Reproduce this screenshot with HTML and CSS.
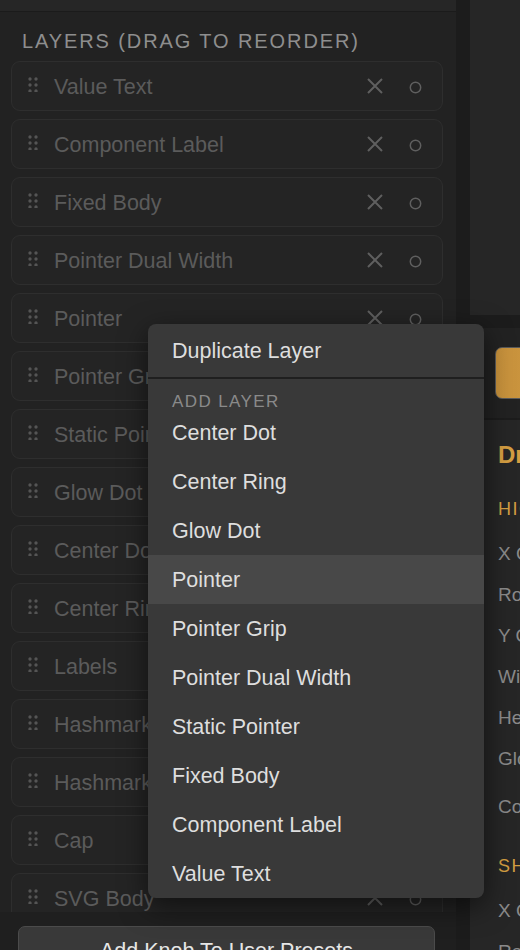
FILE: index.html
```html
<!DOCTYPE html>
<html lang="en">
<head>
    <meta charset="UTF-8">
    <meta name="viewport" content="width=device-width, initial-scale=1.0">
    <title>Knob Designer</title>
    <link rel="stylesheet" href="styles.css">
</head>
<body>
    <div class="app">
        <aside class="sidebar">
            <div class="sidebar-top"></div>
            <section class="layers">
                <h3 class="section-title">Layers (drag to reorder)</h3>
                <ul class="layer-list">
                    <li class="layer">
                        <svg class="grip" width="11" height="15" viewBox="0 0 11 15"><circle cx="2" cy="2" r="1.7"/><circle cx="8" cy="2" r="1.7"/><circle cx="2" cy="8" r="1.7"/><circle cx="8" cy="8" r="1.7"/><circle cx="2" cy="14" r="1.7"/><circle cx="8" cy="14" r="1.7"/></svg>
                        <span class="layer-name">Value Text</span>
                        <svg class="remove" width="16" height="16" viewBox="0 0 16 16"><path d="M1 1L15 15M15 1L1 15"/></svg>
                        <svg class="toggle" width="13" height="13" viewBox="0 0 13 13"><circle cx="6.5" cy="6.5" r="5.2"/></svg>
                    </li>
                    <li class="layer">
                        <svg class="grip" width="11" height="15" viewBox="0 0 11 15"><circle cx="2" cy="2" r="1.7"/><circle cx="8" cy="2" r="1.7"/><circle cx="2" cy="8" r="1.7"/><circle cx="8" cy="8" r="1.7"/><circle cx="2" cy="14" r="1.7"/><circle cx="8" cy="14" r="1.7"/></svg>
                        <span class="layer-name">Component Label</span>
                        <svg class="remove" width="16" height="16" viewBox="0 0 16 16"><path d="M1 1L15 15M15 1L1 15"/></svg>
                        <svg class="toggle" width="13" height="13" viewBox="0 0 13 13"><circle cx="6.5" cy="6.5" r="5.2"/></svg>
                    </li>
                    <li class="layer">
                        <svg class="grip" width="11" height="15" viewBox="0 0 11 15"><circle cx="2" cy="2" r="1.7"/><circle cx="8" cy="2" r="1.7"/><circle cx="2" cy="8" r="1.7"/><circle cx="8" cy="8" r="1.7"/><circle cx="2" cy="14" r="1.7"/><circle cx="8" cy="14" r="1.7"/></svg>
                        <span class="layer-name">Fixed Body</span>
                        <svg class="remove" width="16" height="16" viewBox="0 0 16 16"><path d="M1 1L15 15M15 1L1 15"/></svg>
                        <svg class="toggle" width="13" height="13" viewBox="0 0 13 13"><circle cx="6.5" cy="6.5" r="5.2"/></svg>
                    </li>
                    <li class="layer">
                        <svg class="grip" width="11" height="15" viewBox="0 0 11 15"><circle cx="2" cy="2" r="1.7"/><circle cx="8" cy="2" r="1.7"/><circle cx="2" cy="8" r="1.7"/><circle cx="8" cy="8" r="1.7"/><circle cx="2" cy="14" r="1.7"/><circle cx="8" cy="14" r="1.7"/></svg>
                        <span class="layer-name">Pointer Dual Width</span>
                        <svg class="remove" width="16" height="16" viewBox="0 0 16 16"><path d="M1 1L15 15M15 1L1 15"/></svg>
                        <svg class="toggle" width="13" height="13" viewBox="0 0 13 13"><circle cx="6.5" cy="6.5" r="5.2"/></svg>
                    </li>
                    <li class="layer">
                        <svg class="grip" width="11" height="15" viewBox="0 0 11 15"><circle cx="2" cy="2" r="1.7"/><circle cx="8" cy="2" r="1.7"/><circle cx="2" cy="8" r="1.7"/><circle cx="8" cy="8" r="1.7"/><circle cx="2" cy="14" r="1.7"/><circle cx="8" cy="14" r="1.7"/></svg>
                        <span class="layer-name">Pointer</span>
                        <svg class="remove" width="16" height="16" viewBox="0 0 16 16"><path d="M1 1L15 15M15 1L1 15"/></svg>
                        <svg class="toggle" width="13" height="13" viewBox="0 0 13 13"><circle cx="6.5" cy="6.5" r="5.2"/></svg>
                    </li>
                    <li class="layer">
                        <svg class="grip" width="11" height="15" viewBox="0 0 11 15"><circle cx="2" cy="2" r="1.7"/><circle cx="8" cy="2" r="1.7"/><circle cx="2" cy="8" r="1.7"/><circle cx="8" cy="8" r="1.7"/><circle cx="2" cy="14" r="1.7"/><circle cx="8" cy="14" r="1.7"/></svg>
                        <span class="layer-name">Pointer Grip</span>
                        <svg class="remove" width="16" height="16" viewBox="0 0 16 16"><path d="M1 1L15 15M15 1L1 15"/></svg>
                        <svg class="toggle" width="13" height="13" viewBox="0 0 13 13"><circle cx="6.5" cy="6.5" r="5.2"/></svg>
                    </li>
                    <li class="layer">
                        <svg class="grip" width="11" height="15" viewBox="0 0 11 15"><circle cx="2" cy="2" r="1.7"/><circle cx="8" cy="2" r="1.7"/><circle cx="2" cy="8" r="1.7"/><circle cx="8" cy="8" r="1.7"/><circle cx="2" cy="14" r="1.7"/><circle cx="8" cy="14" r="1.7"/></svg>
                        <span class="layer-name">Static Pointer</span>
                        <svg class="remove" width="16" height="16" viewBox="0 0 16 16"><path d="M1 1L15 15M15 1L1 15"/></svg>
                        <svg class="toggle" width="13" height="13" viewBox="0 0 13 13"><circle cx="6.5" cy="6.5" r="5.2"/></svg>
                    </li>
                    <li class="layer">
                        <svg class="grip" width="11" height="15" viewBox="0 0 11 15"><circle cx="2" cy="2" r="1.7"/><circle cx="8" cy="2" r="1.7"/><circle cx="2" cy="8" r="1.7"/><circle cx="8" cy="8" r="1.7"/><circle cx="2" cy="14" r="1.7"/><circle cx="8" cy="14" r="1.7"/></svg>
                        <span class="layer-name">Glow Dot</span>
                        <svg class="remove" width="16" height="16" viewBox="0 0 16 16"><path d="M1 1L15 15M15 1L1 15"/></svg>
                        <svg class="toggle" width="13" height="13" viewBox="0 0 13 13"><circle cx="6.5" cy="6.5" r="5.2"/></svg>
                    </li>
                    <li class="layer">
                        <svg class="grip" width="11" height="15" viewBox="0 0 11 15"><circle cx="2" cy="2" r="1.7"/><circle cx="8" cy="2" r="1.7"/><circle cx="2" cy="8" r="1.7"/><circle cx="8" cy="8" r="1.7"/><circle cx="2" cy="14" r="1.7"/><circle cx="8" cy="14" r="1.7"/></svg>
                        <span class="layer-name">Center Dot</span>
                        <svg class="remove" width="16" height="16" viewBox="0 0 16 16"><path d="M1 1L15 15M15 1L1 15"/></svg>
                        <svg class="toggle" width="13" height="13" viewBox="0 0 13 13"><circle cx="6.5" cy="6.5" r="5.2"/></svg>
                    </li>
                    <li class="layer">
                        <svg class="grip" width="11" height="15" viewBox="0 0 11 15"><circle cx="2" cy="2" r="1.7"/><circle cx="8" cy="2" r="1.7"/><circle cx="2" cy="8" r="1.7"/><circle cx="8" cy="8" r="1.7"/><circle cx="2" cy="14" r="1.7"/><circle cx="8" cy="14" r="1.7"/></svg>
                        <span class="layer-name">Center Ring</span>
                        <svg class="remove" width="16" height="16" viewBox="0 0 16 16"><path d="M1 1L15 15M15 1L1 15"/></svg>
                        <svg class="toggle" width="13" height="13" viewBox="0 0 13 13"><circle cx="6.5" cy="6.5" r="5.2"/></svg>
                    </li>
                    <li class="layer">
                        <svg class="grip" width="11" height="15" viewBox="0 0 11 15"><circle cx="2" cy="2" r="1.7"/><circle cx="8" cy="2" r="1.7"/><circle cx="2" cy="8" r="1.7"/><circle cx="8" cy="8" r="1.7"/><circle cx="2" cy="14" r="1.7"/><circle cx="8" cy="14" r="1.7"/></svg>
                        <span class="layer-name">Labels</span>
                        <svg class="remove" width="16" height="16" viewBox="0 0 16 16"><path d="M1 1L15 15M15 1L1 15"/></svg>
                        <svg class="toggle" width="13" height="13" viewBox="0 0 13 13"><circle cx="6.5" cy="6.5" r="5.2"/></svg>
                    </li>
                    <li class="layer">
                        <svg class="grip" width="11" height="15" viewBox="0 0 11 15"><circle cx="2" cy="2" r="1.7"/><circle cx="8" cy="2" r="1.7"/><circle cx="2" cy="8" r="1.7"/><circle cx="8" cy="8" r="1.7"/><circle cx="2" cy="14" r="1.7"/><circle cx="8" cy="14" r="1.7"/></svg>
                        <span class="layer-name">Hashmarks Major</span>
                        <svg class="remove" width="16" height="16" viewBox="0 0 16 16"><path d="M1 1L15 15M15 1L1 15"/></svg>
                        <svg class="toggle" width="13" height="13" viewBox="0 0 13 13"><circle cx="6.5" cy="6.5" r="5.2"/></svg>
                    </li>
                    <li class="layer">
                        <svg class="grip" width="11" height="15" viewBox="0 0 11 15"><circle cx="2" cy="2" r="1.7"/><circle cx="8" cy="2" r="1.7"/><circle cx="2" cy="8" r="1.7"/><circle cx="8" cy="8" r="1.7"/><circle cx="2" cy="14" r="1.7"/><circle cx="8" cy="14" r="1.7"/></svg>
                        <span class="layer-name">Hashmarks Minor</span>
                        <svg class="remove" width="16" height="16" viewBox="0 0 16 16"><path d="M1 1L15 15M15 1L1 15"/></svg>
                        <svg class="toggle" width="13" height="13" viewBox="0 0 13 13"><circle cx="6.5" cy="6.5" r="5.2"/></svg>
                    </li>
                    <li class="layer">
                        <svg class="grip" width="11" height="15" viewBox="0 0 11 15"><circle cx="2" cy="2" r="1.7"/><circle cx="8" cy="2" r="1.7"/><circle cx="2" cy="8" r="1.7"/><circle cx="8" cy="8" r="1.7"/><circle cx="2" cy="14" r="1.7"/><circle cx="8" cy="14" r="1.7"/></svg>
                        <span class="layer-name">Cap</span>
                        <svg class="remove" width="16" height="16" viewBox="0 0 16 16"><path d="M1 1L15 15M15 1L1 15"/></svg>
                        <svg class="toggle" width="13" height="13" viewBox="0 0 13 13"><circle cx="6.5" cy="6.5" r="5.2"/></svg>
                    </li>
                    <li class="layer">
                        <svg class="grip" width="11" height="15" viewBox="0 0 11 15"><circle cx="2" cy="2" r="1.7"/><circle cx="8" cy="2" r="1.7"/><circle cx="2" cy="8" r="1.7"/><circle cx="8" cy="8" r="1.7"/><circle cx="2" cy="14" r="1.7"/><circle cx="8" cy="14" r="1.7"/></svg>
                        <span class="layer-name">SVG Body</span>
                        <svg class="remove" width="16" height="16" viewBox="0 0 16 16"><path d="M1 1L15 15M15 1L1 15"/></svg>
                        <svg class="toggle" width="13" height="13" viewBox="0 0 13 13"><circle cx="6.5" cy="6.5" r="5.2"/></svg>
                    </li>
                </ul>
            </section>
            <div class="sidebar-footer">
                <button class="btn">Add Knob To User Presets</button>
            </div>
        </aside>

        <main class="workspace">
            <div class="preview"></div>
            <div class="toolbar">
                <button class="btn-accent">Export Knob</button>
            </div>
            <div class="props">
                <h2 class="props-title">Drop Pointer</h2>
                <div class="group">
                    <h4 class="group-title">Highlight</h4>
                    <div class="prop-row">X Offset</div>
                    <div class="prop-row">Rotation</div>
                    <div class="prop-row">Y Offset</div>
                    <div class="prop-row">Width</div>
                    <div class="prop-row">Height</div>
                    <div class="prop-row">Glow</div>
                    <div class="prop-row tall">Color</div>
                </div>
                <div class="group">
                    <h4 class="group-title">Shadow</h4>
                    <div class="prop-row">X Offset</div>
                    <div class="prop-row">Radius</div>
                </div>
            </div>
        </main>

        <div class="context-menu">
            <div class="menu-item">Duplicate Layer</div>
            <div class="menu-divider"></div>
            <div class="menu-label">Add Layer</div>
            <div class="menu-item">Center Dot</div>
            <div class="menu-item">Center Ring</div>
            <div class="menu-item">Glow Dot</div>
            <div class="menu-item active">Pointer</div>
            <div class="menu-item">Pointer Grip</div>
            <div class="menu-item">Pointer Dual Width</div>
            <div class="menu-item">Static Pointer</div>
            <div class="menu-item">Fixed Body</div>
            <div class="menu-item">Component Label</div>
            <div class="menu-item">Value Text</div>
        </div>
    </div>
</body>
</html>
```

FILE: styles.css
```css
* {
    box-sizing: border-box;
}
body {
    margin: 0;
    background: #1c1c1c;
    font-family: "Liberation Sans", Arial, sans-serif;
    overflow: hidden;
}
.app {
    position: relative;
    display: flex;
    gap: 14px;
    height: 950px;
    width: 520px;
    overflow: hidden;
    background: #1c1c1c;
}

/* left sidebar */
.sidebar {
    width: 456px;
    flex-shrink: 0;
    display: flex;
    flex-direction: column;
    background: #222;
}
.sidebar-top {
    height: 12px;
    background: #262626;
    border-bottom: 1px solid #1b1b1b;
}
.layers {
    flex: 1;
    min-height: 0;
    overflow: hidden;
    padding: 18px 13px 0 11px;
}
.section-title {
    margin: 0 0 9px 11px;
    font-size: 20px;
    line-height: 22px;
    font-weight: normal;
    letter-spacing: 1.9px;
    text-transform: uppercase;
    color: #8e8e8e;
}
.layer-list {
    list-style: none;
    margin: 0;
    padding: 0;
    display: flex;
    flex-direction: column;
    gap: 8px;
}
.layer {
    height: 50px;
    flex-shrink: 0;
    display: flex;
    align-items: center;
    padding: 0 20px 0 16px;
    background: #242424;
    border: 1px solid #2e2e2e;
    border-radius: 9px;
}
.grip {
    fill: #555;
    margin-top: -3px;
}
.layer-name {
    flex: 1;
    margin: 2px 0 0 15px;
    font-size: 21.5px;
    color: #5b5b5b;
    white-space: nowrap;
}
.remove {
    stroke: #5f5f5f;
    stroke-width: 2;
    fill: none;
}
.toggle {
    margin-left: 26px;
    margin-top: 3px;
    stroke: #5f5f5f;
    stroke-width: 1.5;
    fill: none;
}
.sidebar-footer {
    height: 38px;
    flex-shrink: 0;
    overflow: hidden;
    background: #1f1f1f;
    padding: 14px 21px 0 18px;
}
.btn {
    width: 100%;
    padding: 12px;
    font-family: inherit;
    font-size: 21.5px;
    line-height: 24px;
    color: #e6e6e6;
    background: #393939;
    border: 1px solid #4b4b4b;
    border-radius: 7px;
}

/* right side */
.workspace {
    flex: 1;
    min-width: 0;
    display: flex;
    flex-direction: column;
    overflow: hidden;
}
.preview {
    height: 315px;
    flex-shrink: 0;
    background: #262626;
}
.toolbar {
    height: 90px;
    flex-shrink: 0;
    margin-top: 13px;
    padding: 19px 0 0 25px;
    background: #222;
}
.btn-accent {
    width: 220px;
    height: 52px;
    font-family: inherit;
    font-size: 20px;
    color: #1c1c1c;
    background: linear-gradient(90deg, #c8923c, #d6a24c);
    border: 1px solid #5a5a5a;
    border-radius: 7px;
    white-space: nowrap;
}
.props {
    flex: 1;
    margin-top: 2px;
    padding: 21px 0 0 28px;
    background: #262626;
    white-space: nowrap;
}
.props-title {
    margin: 0;
    font-size: 24px;
    line-height: 28px;
    color: #d49e42;
}
.group {
    margin-top: 21px;
}
.group:first-of-type {
    margin-top: 29px;
}
.group-title {
    margin: 0 0 13px;
    font-size: 18px;
    line-height: 22px;
    font-weight: normal;
    letter-spacing: 1.5px;
    text-transform: uppercase;
    color: #d49e42;
}
.prop-row {
    height: 41px;
    line-height: 41px;
    font-size: 19px;
    color: #8a8a8a;
}
.prop-row.tall {
    height: 55px;
    line-height: 55px;
}

/* context menu */
.context-menu {
    position: absolute;
    left: 148px;
    top: 324px;
    width: 336px;
    padding-top: 2px;
    background: #393939;
    border-radius: 8px;
    box-shadow: 0 8px 28px rgba(0, 0, 0, 0.55);
    overflow: hidden;
    z-index: 10;
}
.menu-item {
    height: 49px;
    line-height: 47px;
    padding: 2px 24px 0;
    font-size: 21.5px;
    color: #dedede;
}
.menu-item.active {
    background: #484848;
}
.menu-divider {
    height: 2px;
    margin-top: 2px;
    background: #1f1f1f;
}
.menu-label {
    padding: 15px 24px 0;
    height: 29px;
    font-size: 17px;
    line-height: 15px;
    letter-spacing: 1.4px;
    text-transform: uppercase;
    color: #8a8a8a;
}
```
